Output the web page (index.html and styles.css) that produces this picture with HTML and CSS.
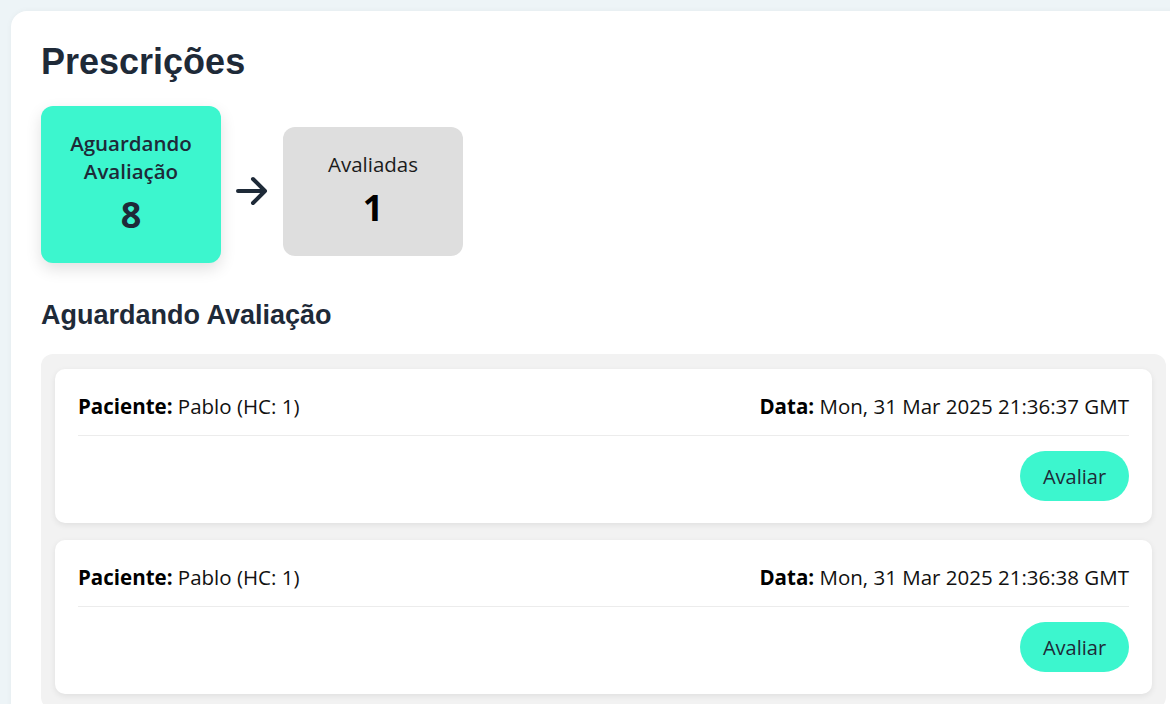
FILE: index.html
```html
<!DOCTYPE html>
<html lang="pt">
<head>
<meta charset="utf-8">
<title>Prescrições</title>
<link rel="stylesheet" href="styles.css">
</head>
<body>
<main class="panel">
  <h1 class="page-title">Prescrições</h1>
  <div class="flow">
    <div class="stat stat-active">
      <div class="stat-label">Aguardando<br>Avaliação</div>
      <div class="stat-value">8</div>
    </div>
    <svg class="flow-arrow" width="34" height="30" viewBox="0 0 34 30" aria-hidden="true">
      <path d="M3 15 H30 M18 3 L30 15 L18 27" fill="none" stroke="#1e2a38" stroke-width="4" stroke-linecap="round" stroke-linejoin="round"/>
    </svg>
    <div class="stat stat-done">
      <div class="stat-label light">Avaliadas</div>
      <div class="stat-value dark">1</div>
    </div>
  </div>
  <h2 class="section-title">Aguardando Avaliação</h2>
  <div class="list">
    <div class="item">
      <div class="item-head">
        <span><b>Paciente:</b> Pablo (HC: 1)</span>
        <span><b>Data:</b> Mon, 31 Mar 2025 21:36:37 GMT</span>
      </div>
      <div class="item-actions"><button class="btn">Avaliar</button></div>
    </div>
    <div class="item">
      <div class="item-head">
        <span><b>Paciente:</b> Pablo (HC: 1)</span>
        <span><b>Data:</b> Mon, 31 Mar 2025 21:36:38 GMT</span>
      </div>
      <div class="item-actions"><button class="btn">Avaliar</button></div>
    </div>
  </div>
</main>
</body>
</html>
```
FILE: styles.css
```css
html, body {
  margin: 0;
  padding: 0;
  overflow: hidden;
  background: #edf4f7;
}
body {
  padding: 11px 0 0 11px;
  font-family: "Open Sans", "Noto Sans", sans-serif;
  color: #1e2a38;
}
.panel {
  width: 1125px;
  background: #ffffff;
  border-radius: 16px;
  padding: 30px 30px 40px 30px;
  box-shadow: 0 0 6px rgba(0,0,0,0.04);
}
.page-title {
  margin: 0;
  font-family: "Liberation Sans", Arial, sans-serif;
  font-weight: 700;
  font-size: 36px;
  line-height: 42px;
  color: #1e2a38;
}
.flow {
  display: flex;
  align-items: center;
  gap: 14px;
  margin-top: 33px;
  height: 150px;
}
.stat {
  width: 180px;
  box-sizing: border-box;
  border-radius: 12px;
  padding-bottom: 5px;
  text-align: center;
  display: flex;
  flex-direction: column;
  align-items: center;
  justify-content: center;
}
.stat-active {
  height: 157px;
  background: #3cf6ce;
  box-shadow: 0 6px 16px rgba(0,0,0,0.12);
  transform: translateY(-7px);
}
.stat-done {
  height: 129px;
  background: #dedede;
}
.stat-label {
  font-size: 20.5px;
  font-weight: 600;
  line-height: 28px;
  color: #1e2a38;
}
.stat-label.light {
  font-weight: 400;
  color: #1b1b1b;
}
.stat-value {
  font-size: 36px;
  font-weight: 700;
  line-height: 40px;
  margin-top: 10px;
  color: #1e2a38;
}
.stat-value.dark {
  color: #000;
}
.flow-arrow {
  display: block;
}
.section-title {
  margin: 33px 0 0 0;
  font-family: "Liberation Sans", Arial, sans-serif;
  font-weight: 700;
  font-size: 27px;
  line-height: 32px;
  color: #1e2a38;
}
.list {
  margin-top: 23px;
  background: #f2f2f2;
  border-radius: 12px;
  padding: 15px 14px;
  display: flex;
  flex-direction: column;
  gap: 17px;
}
.item {
  background: #fff;
  border-radius: 10px;
  box-shadow: 0 2px 6px rgba(0,0,0,0.08);
  padding: 22px 23px 22px 23px;
}
.item-head {
  display: flex;
  justify-content: space-between;
  font-size: 20.5px;
  line-height: 30px;
  color: #111;
  padding-bottom: 14px;
  border-bottom: 1px solid #ececec;
}
.item-head b {
  font-weight: 700;
  color: #000;
}
.item-actions {
  display: flex;
  justify-content: flex-end;
  margin-top: 15px;
}
.btn {
  width: 109px;
  height: 50px;
  border: none;
  border-radius: 25px;
  background: #3cf6ce;
  font-family: "Open Sans", "Noto Sans", sans-serif;
  font-size: 20px;
  color: #1e2a38;
  cursor: pointer;
}
```
